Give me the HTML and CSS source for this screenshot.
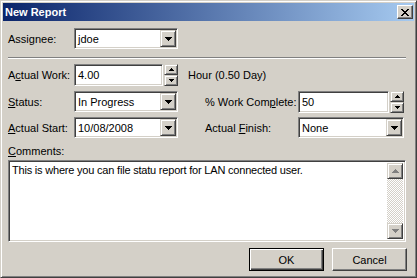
FILE: index.html
```html
<!DOCTYPE html>
<html>
<head>
  <title>New Report</title>
<link rel="stylesheet" href="styles.css">
</head>
<body>
  <div class="window">
    <div class="titlebar">
      <span class="title">New Report</span>
      <span class="close-btn">
        <svg width="8" height="7" viewBox="0 0 8 7"><path d="M0 0h2v1h-2z M6 0h2v1h-2z M1 1h2v1h-2z M5 1h2v1h-2z M2 2h4v1h-4z M3 3h2v1h-2z M2 4h4v1h-4z M1 5h2v1h-2z M5 5h2v1h-2z M0 6h2v1h-2z M6 6h2v1h-2z" fill="#000"/></svg>
      </span>
    </div>

    <div class="content">
      <!-- assignee -->
      <div class="top-row">
        <span class="label">Assi<u>g</u>nee:</span>
        <div class="combo combo-left">
          <span class="value">jdoe</span>
          <span class="drop"><svg width="7" height="4" viewBox="0 0 7 4"><path d="M0 0h7v1h-7z M1 1h5v1h-5z M2 2h3v1h-3z M3 3h1v1h-1z" fill="#000"/></svg></span>
        </div>
      </div>

      <div class="separator"></div>

      <div class="form-grid">
        <span class="label">A<u>c</u>tual Work:</span>
        <div class="spin spin-left">
          <div class="field"><span class="value">4.00</span></div>
          <div class="spin-btns">
            <span class="spin-btn"><svg width="5" height="3" viewBox="0 0 5 3"><path d="M2 0h1v1h-1z M1 1h3v1h-3z M0 2h5v1h-5z" fill="#000"/></svg></span>
            <span class="spin-btn"><svg width="5" height="3" viewBox="0 0 5 3"><path d="M0 0h5v1h-5z M1 1h3v1h-3z M2 2h1v1h-1z" fill="#000"/></svg></span>
          </div>
        </div>
        <span class="unit">Hour (0.50 Day)</span>

        <span class="label"><u>S</u>tatus:</span>
        <div class="combo combo-left">
          <span class="value">In Progress</span>
          <span class="drop"><svg width="7" height="4" viewBox="0 0 7 4"><path d="M0 0h7v1h-7z M1 1h5v1h-5z M2 2h3v1h-3z M3 3h1v1h-1z" fill="#000"/></svg></span>
        </div>
        <span class="label label-right">% Work Com<u>p</u>lete:</span>
        <div class="spin spin-right">
          <div class="field"><span class="value">50</span></div>
          <div class="spin-btns">
            <span class="spin-btn"><svg width="5" height="3" viewBox="0 0 5 3"><path d="M2 0h1v1h-1z M1 1h3v1h-3z M0 2h5v1h-5z" fill="#000"/></svg></span>
            <span class="spin-btn"><svg width="5" height="3" viewBox="0 0 5 3"><path d="M0 0h5v1h-5z M1 1h3v1h-3z M2 2h1v1h-1z" fill="#000"/></svg></span>
          </div>
        </div>

        <span class="label"><u>A</u>ctual Start:</span>
        <div class="combo combo-left">
          <span class="value">10/08/2008</span>
          <span class="drop"><svg width="7" height="4" viewBox="0 0 7 4"><path d="M0 0h7v1h-7z M1 1h5v1h-5z M2 2h3v1h-3z M3 3h1v1h-1z" fill="#000"/></svg></span>
        </div>
        <span class="label label-right">Actual <u>F</u>inish:</span>
        <div class="combo combo-right">
          <span class="value">None</span>
          <span class="drop"><svg width="7" height="4" viewBox="0 0 7 4"><path d="M0 0h7v1h-7z M1 1h5v1h-5z M2 2h3v1h-3z M3 3h1v1h-1z" fill="#000"/></svg></span>
        </div>
      </div>

      <div class="comments-label"><u>C</u>omments:</div>
      <div class="memo">
        <div class="memo-text">This is where you can file statu report for LAN connected user.</div>
        <div class="scrollbar">
          <span class="scroll-btn"><svg width="7" height="4" viewBox="0 0 7 4"><path d="M3 0h1v1h-1z M2 1h3v1h-3z M1 2h5v1h-5z M0 3h7v1h-7z" fill="#808080"/></svg></span>
          <span class="scroll-track"></span>
          <span class="scroll-btn"><svg width="7" height="4" viewBox="0 0 7 4"><path d="M0 0h7v1h-7z M1 1h5v1h-5z M2 2h3v1h-3z M3 3h1v1h-1z" fill="#808080"/></svg></span>
        </div>
      </div>

      <div class="buttons">
        <button type="button" class="btn btn-default">OK</button>
        <button type="button" class="btn">Cancel</button>
      </div>
    </div>
  </div>
</body>
</html>
```

FILE: styles.css
```css
body {
  margin: 0;
  padding: 0;
  font-family: "Liberation Sans", Arial, sans-serif;
  font-size: 11px;
  color: #000;
  background-color: #d4d0c8;
}

.window {
  box-sizing: border-box;
  width: 417px;
  height: 278px;
  padding: 2px;
  background-color: #d4d0c8;
  border: 1px solid;
  border-color: #d4d0c8 #404040 #404040 #d4d0c8;
  box-shadow: inset 1px 1px #fff, inset -1px -1px #808080;
}

.titlebar {
  height: 18px;
  display: flex;
  align-items: center;
  justify-content: space-between;
  background: linear-gradient(to right, #0a246a, #a6caf0);
}

.title {
  color: #fff;
  font-weight: bold;
  font-size: 11px;
  padding-left: 2px;
}

.close-btn {
  box-sizing: border-box;
  width: 16px;
  height: 14px;
  margin-right: 1px;
  display: flex;
  align-items: center;
  justify-content: center;
  background-color: #d4d0c8;
  border: 1px solid;
  border-color: #fff #404040 #404040 #fff;
  box-shadow: inset -1px -1px #808080;
}

.content {
  padding: 7px 7px 0 5px;
}

.label {
  white-space: nowrap;
}

.top-row {
  display: flex;
  align-items: center;
  height: 21px;
}

.top-row .label {
  width: 66px;
}

.separator {
  margin-top: 8px;
  width: 398px;
  border-top: 1px solid #808080;
  border-bottom: 1px solid #fff;
}

.form-grid {
  margin-top: 5px;
  display: grid;
  grid-template-columns: 66px 104px 10px 17px 93px 106px;
  grid-template-rows: 22px 21px 21px;
  row-gap: 5px;
  align-items: center;
}

.form-grid .label {
  grid-column: 1;
}

.form-grid .label-right {
  grid-column: 5;
}

.combo-left,
.spin-left {
  grid-column: 2;
  width: 104px;
}

.combo-right,
.spin-right {
  grid-column: 6;
  width: 106px;
}

.unit {
  grid-column: 4 / 7;
}

/* sunken field */
.combo,
.field,
.memo {
  box-sizing: border-box;
  background-color: #fff;
  border: 1px solid;
  border-color: #808080 #fff #fff #808080;
  box-shadow: inset 1px 1px #404040, inset -1px -1px #d4d0c8;
}

.combo {
  height: 21px;
  padding: 1px;
  display: flex;
  align-items: stretch;
  justify-content: space-between;
}

.value {
  padding-left: 2px;
  display: flex;
  align-items: center;
}

/* raised button face */
.drop,
.spin-btn,
.scroll-btn {
  box-sizing: border-box;
  background-color: #d4d0c8;
  border: 1px solid;
  border-color: #d4d0c8 #404040 #404040 #d4d0c8;
  box-shadow: inset 1px 1px #fff, inset -1px -1px #808080;
  display: flex;
  align-items: center;
  justify-content: center;
}

.drop {
  width: 16px;
}

.spin {
  display: flex;
  height: 22px;
}

.spin .field {
  flex: 1;
  padding: 1px;
  display: flex;
}

.spin-btns {
  width: 14px;
  margin-left: 1px;
  display: flex;
  flex-direction: column;
}

.spin-btn {
  flex: 1;
}

.comments-label {
  margin-top: 7px;
  line-height: 13px;
  height: 13px;
  margin-bottom: 2px;
}

.memo {
  width: 398px;
  height: 82px;
  padding: 2px;
  display: flex;
  justify-content: space-between;
  letter-spacing: -0.2px;
}

.memo-text {
  padding: 1px 0 0 1px;
}

.scrollbar {
  width: 16px;
  display: flex;
  flex-direction: column;
}

.scroll-btn {
  height: 16px;
}

.scroll-track {
  flex: 1;
  background: repeating-conic-gradient(#d4d0c8 0 25%, #fff 0 50%) 0 0 / 2px 2px;
}

.buttons {
  margin-top: 6px;
  display: flex;
  justify-content: flex-end;
  gap: 8px;
}

.btn {
  box-sizing: border-box;
  width: 75px;
  height: 23px;
  padding: 0;
  font-family: "Liberation Sans", Arial, sans-serif;
  font-size: 11px;
  color: #000;
  background-color: #d4d0c8;
  border: 1px solid;
  border-color: #fff #404040 #404040 #fff;
  box-shadow: inset -1px -1px #808080;
}

.btn-default {
  border: 1px solid #000;
  box-shadow: inset 1px 1px #fff, inset -1px -1px #404040, inset -2px -2px #808080;
}
```
